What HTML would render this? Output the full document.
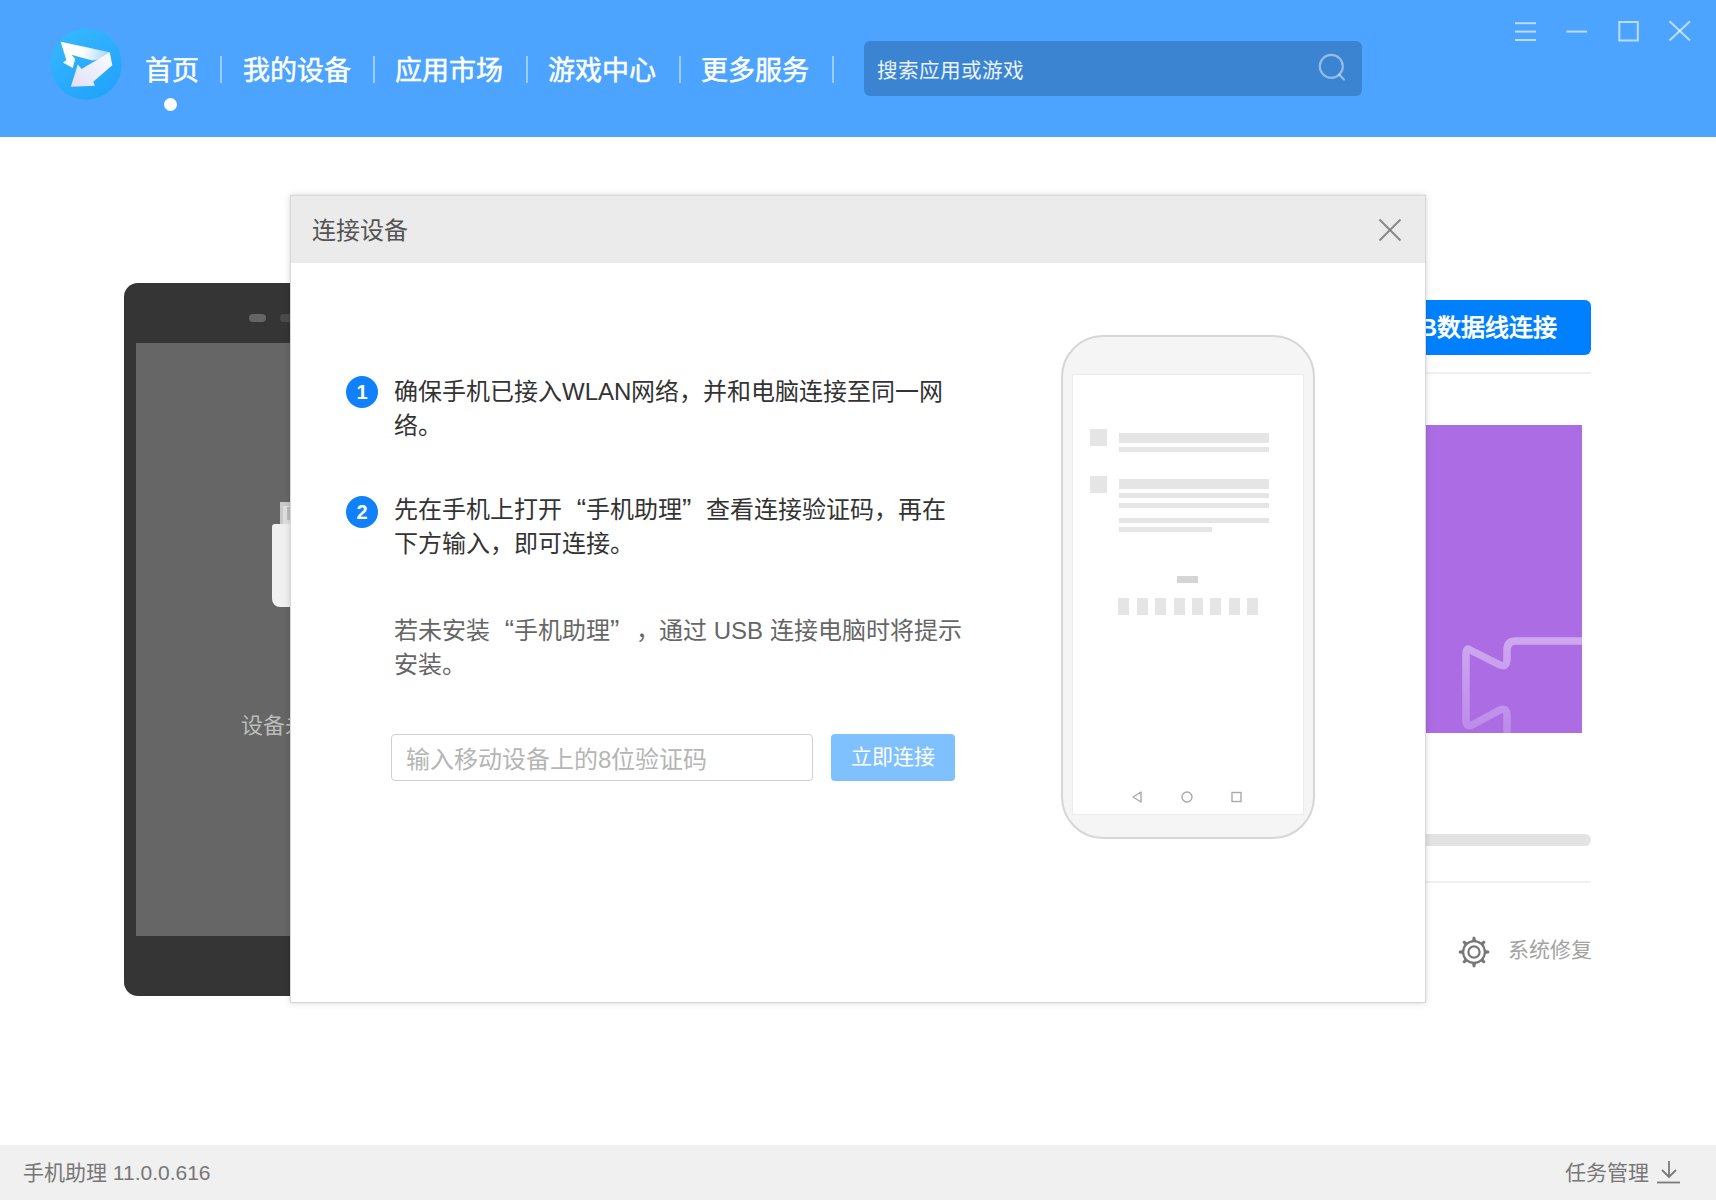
<!DOCTYPE html>
<html lang="zh-CN"><head><meta charset="utf-8">
<style>
*{margin:0;padding:0;box-sizing:border-box}
html,body{width:1716px;height:1200px;overflow:hidden;background:#fff;font-family:"Liberation Sans",sans-serif;position:relative}
.abs{position:absolute}
#hdr{left:0;top:0;width:1716px;height:137px;background:#4ca4ff}
.nav{position:absolute;top:51px;height:40px;line-height:40px;font-size:27px;font-weight:normal;-webkit-text-stroke:0.5px #fff;color:#fff;white-space:nowrap}
.sep{position:absolute;top:56px;width:2px;height:27px;background:rgba(255,255,255,0.45)}
#search{left:864px;top:41px;width:498px;height:55px;border-radius:6px;background:#3b84d2}
#search span{position:absolute;left:13px;top:17px;font-size:20.6px;line-height:26px;color:#eaf3ff}
#dlg{left:290px;top:195px;width:1136px;height:808px;background:#fff;border:1px solid #d8d8d8;box-shadow:0 0 7px rgba(0,0,0,0.13),0 0 2px rgba(0,0,0,0.08)}
#dlgt{left:0;top:0;width:1134px;height:67px;background:#ebebeb}
.badge{width:32px;height:32px;border-radius:50%;background:#1181fb;color:#fff;font-size:20px;font-weight:bold;line-height:32px;text-align:center}
.txt{font-size:24px;line-height:34px;color:#333;white-space:nowrap}
.qo{display:inline-block;width:24px;text-align:right;font-size:28px;line-height:20px}
.qc{display:inline-block;width:24px;text-align:left;font-size:28px;line-height:20px}
#footer{left:0;top:1145px;width:1716px;height:55px;background:#f0f0f0}
</style></head><body>
<div id="hdr" class="abs">
  <svg class="abs" style="left:48px;top:26px" width="76" height="76" viewBox="0 0 76 76">
    <defs>
      <linearGradient id="lg" x1="0.2" y1="0" x2="0.8" y2="1"><stop offset="0" stop-color="#36b7ff"/><stop offset="1" stop-color="#20a2fb"/></linearGradient>
      <linearGradient id="bg1" x1="12" y1="20" x2="62" y2="30" gradientUnits="userSpaceOnUse"><stop offset="0" stop-color="#ffffff"/><stop offset="0.45" stop-color="#ffffff"/><stop offset="1" stop-color="#9fd3ff"/></linearGradient>
      <linearGradient id="bg2" x1="60" y1="28" x2="26" y2="60" gradientUnits="userSpaceOnUse"><stop offset="0" stop-color="#f6faff"/><stop offset="1" stop-color="#e4e0f6"/></linearGradient>
    </defs>
    <circle cx="38.2" cy="38.2" r="35.6" fill="url(#lg)"/>
    <path d="M12.7,15.8 L61.7,26.3 L62.5,31 L44.3,34.5 L23.4,28.8 L27.2,32.9 L24.7,42.1 L14.9,36.4 L18.4,34.2 Z" fill="url(#bg1)"/>
    <path d="M61.7,26.3 L64.3,39.3 L45.3,55.7 L46.9,59.8 L22.8,60.8 L29.8,38.6 L33.6,43.1 Z" fill="url(#bg2)"/>
  </svg>
  <div class="nav" style="left:145px">首页</div>
  <div class="abs" style="left:164px;top:98px;width:13px;height:13px;border-radius:50%;background:#fff"></div>
  <div class="sep" style="left:220px"></div>
  <div class="nav" style="left:243px">我的设备</div>
  <div class="sep" style="left:373px"></div>
  <div class="nav" style="left:395px">应用市场</div>
  <div class="sep" style="left:526px"></div>
  <div class="nav" style="left:548px">游戏中心</div>
  <div class="sep" style="left:679px"></div>
  <div class="nav" style="left:701px">更多服务</div>
  <div class="sep" style="left:832px"></div>
  <svg class="abs" style="left:1500px;top:10px" width="216" height="50" viewBox="0 0 216 50">
    <g stroke="rgba(255,255,255,0.62)" stroke-width="2" fill="none">
      <line x1="15" y1="13.2" x2="36" y2="13.2"/><line x1="15" y1="21.6" x2="36" y2="21.6"/><line x1="15" y1="30" x2="36" y2="30"/>
      <line x1="66.3" y1="21.6" x2="87" y2="21.6"/>
      <rect x="119.3" y="12" width="18.5" height="18.5"/>
      <line x1="169.5" y1="11.2" x2="190" y2="30.5"/><line x1="190" y1="11.2" x2="169.5" y2="30.5"/>
    </g>
  </svg>
  <div id="search" class="abs"><span>搜索应用或游戏</span>
    <svg class="abs" style="left:452px;top:12px" width="32" height="32" viewBox="0 0 32 32"><circle cx="15.3" cy="13.3" r="11.5" fill="none" stroke="rgba(255,255,255,0.45)" stroke-width="2.2"/><line x1="23" y1="21.5" x2="28" y2="26.5" stroke="rgba(255,255,255,0.45)" stroke-width="2.2" stroke-linecap="round"/></svg>
  </div>
</div>
<!-- left phone -->
<div class="abs" style="left:124px;top:283px;width:400px;height:713px;background:#353535;border-radius:14px"></div>
<div class="abs" style="left:136px;top:343px;width:380px;height:593px;background:#666"></div>
<div class="abs" style="left:249px;top:314px;width:17px;height:8px;border-radius:4px;background:#666"></div>
<div class="abs" style="left:280px;top:314px;width:17px;height:8px;border-radius:4px;background:#4c4c4c"></div>
<div class="abs" style="left:280px;top:502px;width:20px;height:23px;background:#c8c8c8"></div>
<div class="abs" style="left:283px;top:506px;width:17px;height:19px;background:#dedede"></div>
<div class="abs" style="left:287px;top:507px;width:10px;height:13px;background:#bdbdbd"></div>
<div class="abs" style="left:272px;top:524px;width:40px;height:83px;background:#f0f0f0;border-radius:3px 3px 8px 8px"></div>
<div class="abs" style="left:241px;top:710px;font-size:22px;line-height:32px;color:#bbb;white-space:nowrap">设备未连接</div>
<!-- right panel -->
<div class="abs" style="left:1300px;top:300px;width:291px;height:55px;background:#0080ff;border-radius:6px;color:#fff;font-size:24px;font-weight:bold;line-height:55px;text-align:right;padding-right:34px;white-space:nowrap">USB数据线连接</div>
<div class="abs" style="left:1300px;top:372px;width:291px;height:2px;background:#f0f0f0"></div>
<div class="abs" style="left:1300px;top:425px;width:282px;height:308px;background:#ac6de4;overflow:hidden">
  <svg class="abs" style="left:0;top:0" width="282" height="308" viewBox="0 0 282 308">
    <defs><linearGradient id="pg" x1="0" y1="210" x2="0" y2="308" gradientUnits="userSpaceOnUse"><stop offset="0" stop-color="#fff" stop-opacity="0.42"/><stop offset="1" stop-color="#fff" stop-opacity="0.2"/></linearGradient></defs>
    <path d="M290,216 L216,216 Q207,216 207,225 L207,234 Q207,244 198,239 L170,225 Q166,222 166,230 L166,295 Q166,304 174,299 L198,286 Q207,281 207,291 L207,320" fill="none" stroke="url(#pg)" stroke-width="7.5" stroke-linejoin="round"/>
  </svg>
</div>
<div class="abs" style="left:1300px;top:834px;width:291px;height:12px;background:#e3e3e3;border-radius:6px"></div>
<div class="abs" style="left:1300px;top:881px;width:291px;height:2px;background:#f0f0f0"></div>
<svg class="abs" style="left:1456px;top:934px" width="36" height="36" viewBox="0 0 36 36">
  <g fill="#777">
    <circle cx="18" cy="18" r="12"/>
    <g><path d="M16,7 L16.8,2.8 L19.2,2.8 L20,7 Z"/><path d="M16,29 L16.8,33.2 L19.2,33.2 L20,29 Z"/><path d="M7,16 L2.8,16.8 L2.8,19.2 L7,20 Z"/><path d="M29,16 L33.2,16.8 L33.2,19.2 L29,20 Z"/></g>
    <g transform="rotate(45 18 18)"><path d="M16,7 L16.8,2.8 L19.2,2.8 L20,7 Z"/><path d="M16,29 L16.8,33.2 L19.2,33.2 L20,29 Z"/><path d="M7,16 L2.8,16.8 L2.8,19.2 L7,20 Z"/><path d="M29,16 L33.2,16.8 L33.2,19.2 L29,20 Z"/></g>
  </g>
  <circle cx="18" cy="18" r="9.8" fill="#fff"/>
  <circle cx="18" cy="18" r="5.6" fill="none" stroke="#777" stroke-width="2.2"/>
</svg>
<div class="abs" style="left:1508px;top:935px;font-size:21px;line-height:30px;color:#a3a3a3;white-space:nowrap">系统修复</div>
<div id="footer" class="abs">
  <div class="abs" style="left:23px;top:13px;font-size:21px;line-height:30px;color:#777;white-space:nowrap">手机助理 11.0.0.616</div>
  <div class="abs" style="left:1565px;top:13px;font-size:21px;line-height:30px;color:#777;white-space:nowrap">任务管理</div>
  <svg class="abs" style="left:1654px;top:13px" width="30" height="30" viewBox="0 0 30 30"><g stroke="#7a7a7a" stroke-width="1.8" fill="none"><line x1="15" y1="3" x2="15" y2="19"/><polyline points="8,12 15,19 22,12"/><line x1="3" y1="24.5" x2="26" y2="24.5"/></g></svg>
</div>
<div id="dlg" class="abs">
  <div id="dlgt" class="abs"><div class="abs" style="left:21px;top:19px;font-size:24px;line-height:32px;color:#555;white-space:nowrap">连接设备</div>
    <svg class="abs" style="left:1086px;top:21px" width="26" height="26" viewBox="0 0 26 26"><g stroke="#888" stroke-width="2"><line x1="2.5" y1="2.5" x2="23.5" y2="23.5"/><line x1="23.5" y1="2.5" x2="2.5" y2="23.5"/></g></svg>
  </div>
  <div class="badge abs" style="left:55px;top:180px">1</div>
  <div class="txt abs" style="left:103px;top:179px;width:570px">确保手机已接入WLAN网络，并和电脑连接至同一网<br>络。</div>
  <div class="badge abs" style="left:55px;top:300px">2</div>
  <div class="txt abs" style="left:103px;top:297px;width:570px">先在手机上打开<span class="qo">“</span>手机助理<span class="qc">”</span>查看连接验证码，再在<br>下方输入，即可连接。</div>
  <div class="txt abs" style="left:103px;top:418px;width:600px;color:#666">若未安装<span class="qo">“</span>手机助理<span class="qc">”</span><span style="margin:0 -1px 0 2px">，</span>通过 USB 连接电脑时将提示<br>安装。</div>
  <div class="abs" style="left:100px;top:538px;width:422px;height:47px;border:1.5px solid #d0d0d0;border-radius:4px"><span class="abs" style="left:14px;top:10px;font-size:24px;line-height:30px;color:#b5b5b5;white-space:nowrap">输入移动设备上的8位验证码</span></div>
  <div class="abs" style="left:540px;top:538px;width:124px;height:47px;background:#7fc0ff;border-radius:4px;color:#fff;font-size:21px;line-height:46px;text-align:center">立即连接</div>
  <!-- phone illus -->
  <div class="abs" style="left:770px;top:139px;width:254px;height:504px;background:#f5f5f5;border:2px solid #d6d6d6;border-radius:42px"></div>
  <div class="abs" style="left:781px;top:178px;width:232px;height:441px;background:#fff;border:1px solid #ececec"></div>
  <div class="abs" style="left:799px;top:233px;width:17px;height:17px;background:#e5e5e5"></div>
  <div class="abs" style="left:828px;top:237px;width:150px;height:10px;background:#e5e5e5"></div>
  <div class="abs" style="left:828px;top:251px;width:150px;height:5px;background:#e5e5e5"></div>
  <div class="abs" style="left:799px;top:280px;width:17px;height:17px;background:#e5e5e5"></div>
  <div class="abs" style="left:828px;top:283px;width:150px;height:10px;background:#e5e5e5"></div>
  <div class="abs" style="left:828px;top:297px;width:150px;height:5px;background:#e5e5e5"></div>
  <div class="abs" style="left:828px;top:307px;width:150px;height:5px;background:#e5e5e5"></div>
  <div class="abs" style="left:828px;top:322px;width:150px;height:5px;background:#e5e5e5"></div>
  <div class="abs" style="left:828px;top:331px;width:93px;height:5px;background:#e5e5e5"></div>
  <div class="abs" style="left:886px;top:380px;width:21px;height:7px;background:#d5d5d5"></div>
  <div class="abs" style="left:827.3px;top:402px;width:11px;height:17px;background:#e5e5e5"></div>
  <div class="abs" style="left:845.7px;top:402px;width:11px;height:17px;background:#e5e5e5"></div>
  <div class="abs" style="left:864.1px;top:402px;width:11px;height:17px;background:#e5e5e5"></div>
  <div class="abs" style="left:882.5px;top:402px;width:11px;height:17px;background:#e5e5e5"></div>
  <div class="abs" style="left:900.9px;top:402px;width:11px;height:17px;background:#e5e5e5"></div>
  <div class="abs" style="left:919.3px;top:402px;width:11px;height:17px;background:#e5e5e5"></div>
  <div class="abs" style="left:937.7px;top:402px;width:11px;height:17px;background:#e5e5e5"></div>
  <div class="abs" style="left:956.1px;top:402px;width:11px;height:17px;background:#e5e5e5"></div>
  <svg class="abs" style="left:835px;top:589px" width="120" height="24" viewBox="0 0 120 24"><g fill="none" stroke="#aaa" stroke-width="1.4"><path d="M15,7 L15,17 L7,12 Z" stroke-linejoin="round"/><circle cx="61" cy="12" r="5"/><rect x="106" y="7.5" width="9" height="9"/></g></svg>

</div>
</body></html>
